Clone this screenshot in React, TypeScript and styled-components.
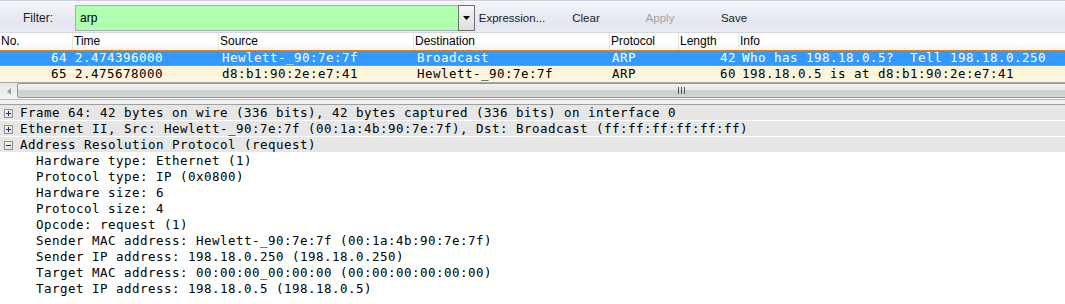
import React from "react";
import styled, { createGlobalStyle } from "styled-components";

const Global = createGlobalStyle`
  html, body { margin: 0; padding: 0; background: #ffffff; overflow: hidden; }
  #root { width: 1065px; height: 304px; overflow: hidden; }
`;

const UI_FONT = `"Liberation Sans", Arial, sans-serif`;
const MONO = `"DejaVu Sans Mono", "Liberation Mono", monospace`;

const Page = styled.div`
  width: 1065px;
  height: 304px;
  display: flex;
  flex-direction: column;
  background: #ffffff;
  overflow: hidden;
`;

/* ---------- Toolbar ---------- */
const Toolbar = styled.div`
  height: 33px;
  box-sizing: border-box;
  display: flex;
  align-items: center;
  padding-top: 2px;
  border-top: 1px solid #c9cddc;
  box-shadow: inset 0 1px 0 #ffffff;
  background: linear-gradient(to bottom, #f4f5fa 0%, #eceef6 35%, #e3e6f0 70%, #e9ebf3 100%);
  border-bottom: 1px solid #d4d7e1;
  font-family: ${UI_FONT};
  font-size: 11.5px;
  color: #1b1b1b;
`;

const FilterLabel = styled.div`
  width: 75px;
  box-sizing: border-box;
  padding-left: 23px;
  font-size: 12px;
`;

const FilterField = styled.div`
  width: 383px;
  height: 26px;
  box-sizing: border-box;
  border: 1px solid #a9acb5;
  border-right: none;
  background: #afffaf;
  display: flex;
  align-items: center;
  padding-left: 4px;
  font-size: 12px;
  color: #000;
`;

const DropButton = styled.div`
  width: 17px;
  height: 26px;
  box-sizing: border-box;
  border: 1px solid #6f6f6f;
  background: linear-gradient(to bottom, #f6f6f6, #dedede);
  display: flex;
  align-items: center;
  justify-content: center;
`;

const ToolButton = styled.div<{ $disabled?: boolean }>`
  width: 74px;
  text-align: center;
  color: ${(p) => (p.$disabled ? "#a3a3a3" : "#1b1b1b")};
`;

/* ---------- Packet list ---------- */
const COLS = "72px 146px 195px 196px 69px 60px 1fr";

const HeaderRow = styled.div`
  height: 17px;
  display: grid;
  grid-template-columns: ${COLS};
  background: linear-gradient(to bottom, #ffffff 0%, #ffffff 60%, #f3f3f3 100%);
  font-family: ${UI_FONT};
  font-size: 12px;
  color: #000;
`;

const HeaderCell = styled.div<{ $first?: boolean }>`
  box-sizing: border-box;
  padding-left: 1px;
  line-height: 17px;
  white-space: nowrap;
  overflow: hidden;
  border-left: ${(p) => (p.$first ? "none" : "1px solid #e3e3e3")};
`;

const PacketRow = styled.div<{ $selected?: boolean }>`
  height: 16px;
  box-sizing: border-box;
  display: grid;
  grid-template-columns: ${COLS};
  font-family: ${MONO};
  font-size: 12.5px;
  letter-spacing: 0.475px;
  line-height: 14px;
  white-space: pre;
  color: ${(p) => (p.$selected ? "#ffffff" : "#000000")};
  background: ${(p) => (p.$selected ? "#3399ff" : "#fff5db")};
  border-top: 1px ${(p) => (p.$selected ? "dotted #e8902e" : "solid #fff5db")};
  border-bottom: 1px ${(p) => (p.$selected ? "dotted #e8902e" : "solid #fff5db")};
`;

const Cell = styled.div<{ $right?: boolean; $pl?: number; $pr?: number }>`
  text-align: ${(p) => (p.$right ? "right" : "left")};
  padding-left: ${(p) => p.$pl ?? 0}px;
  padding-right: ${(p) => p.$pr ?? 0}px;
`;

const ListBottom = styled.div`
  height: 1px;
  background: #a7a7a7;
`;

const HScroll = styled.div`
  height: 16px;
  display: flex;
  overflow: hidden;
  background: linear-gradient(to bottom, #e6e6e6, #f3f3f3);
`;

const ArrowBtn = styled.div`
  width: 17px;
  flex: none;
  display: flex;
  align-items: center;
  justify-content: center;
`;

const Thumb = styled.div`
  width: 1328px;
  flex: none;
  box-sizing: border-box;
  height: 15px;
  border: 1px solid #979797;
  border-radius: 2px;
  background: linear-gradient(
    to bottom,
    #f2f2f2 0%,
    #e6e6e6 45%,
    #cdcdcd 52%,
    #d6d6d6 100%
  );
  display: flex;
  align-items: center;
  justify-content: center;
`;

const Splitter = styled.div`
  box-sizing: border-box;
  height: 6px;
  background: #f0f0f0;
  border-top: 1px solid #b9b9b9;
  border-bottom: 1px solid #a0a0a0;
`;

/* ---------- Details ---------- */
const Details = styled.div`
  flex: 1;
  font-family: ${MONO};
  font-size: 12.5px;
  letter-spacing: 0.475px;
  color: #000;
`;

const TreeRow = styled.div<{ $header?: boolean; $indent?: number }>`
  height: 16px;
  box-sizing: border-box;
  display: flex;
  align-items: flex-start;
  line-height: 15px;
  white-space: pre;
  padding-left: ${(p) => p.$indent ?? 4}px;
  background: ${(p) => (p.$header ? "#e6e6e6" : "#ffffff")};
  border-bottom: 1px solid #ffffff;
`;

const Expander = styled.svg`
  flex: none;
  margin: 4px 7px 0 0;
`;

const ExpandIcon = ({ open }: { open: boolean }) => (
  <Expander width="9" height="9" viewBox="0 0 9 9">
    <defs>
      <linearGradient id={open ? "gm" : "gp"} x1="0" y1="0" x2="1" y2="1">
        <stop offset="0" stopColor="#ffffff" />
        <stop offset="1" stopColor="#d9d9d9" />
      </linearGradient>
    </defs>
    <rect x="0.5" y="0.5" width="8" height="8" fill={`url(#${open ? "gm" : "gp"})`} stroke="#919191" />
    <line x1="2" y1="4.5" x2="7" y2="4.5" stroke="#1f2f6a" />
    {!open && <line x1="4.5" y1="2" x2="4.5" y2="7" stroke="#1f2f6a" />}
  </Expander>
);

const headers = ["No.", "Time", "Source", "Destination", "Protocol", "Length", "Info"];

const packets = [
  {
    no: "64",
    time: "2.474396000",
    src: "Hewlett-_90:7e:7f",
    dst: "Broadcast",
    proto: "ARP",
    len: "42",
    info: "Who has 198.18.0.5?  Tell 198.18.0.250",
    selected: true,
  },
  {
    no: "65",
    time: "2.475678000",
    src: "d8:b1:90:2e:e7:41",
    dst: "Hewlett-_90:7e:7f",
    proto: "ARP",
    len: "60",
    info: "198.18.0.5 is at d8:b1:90:2e:e7:41",
    selected: false,
  },
];

const arpFields = [
  "Hardware type: Ethernet (1)",
  "Protocol type: IP (0x0800)",
  "Hardware size: 6",
  "Protocol size: 4",
  "Opcode: request (1)",
  "Sender MAC address: Hewlett-_90:7e:7f (00:1a:4b:90:7e:7f)",
  "Sender IP address: 198.18.0.250 (198.18.0.250)",
  "Target MAC address: 00:00:00_00:00:00 (00:00:00:00:00:00)",
  "Target IP address: 198.18.0.5 (198.18.0.5)",
];

export default function App() {
  return (
    <Page>
      <Global />
      <Toolbar>
        <FilterLabel>Filter:</FilterLabel>
        <FilterField>arp</FilterField>
        <DropButton>
          <svg width="7" height="4" viewBox="0 0 7 4">
            <polygon points="0,0 7,0 3.5,4" fill="#000" />
          </svg>
        </DropButton>
        <ToolButton>Expression...</ToolButton>
        <ToolButton>Clear</ToolButton>
        <ToolButton $disabled>Apply</ToolButton>
        <ToolButton>Save</ToolButton>
      </Toolbar>

      <HeaderRow>
        {headers.map((h, i) => (
          <HeaderCell key={h} $first={i === 0}>
            {h}
          </HeaderCell>
        ))}
      </HeaderRow>

      {packets.map((p) => (
        <PacketRow key={p.no} $selected={p.selected}>
          <Cell $right $pr={5}>{p.no}</Cell>
          <Cell $pl={3}>{p.time}</Cell>
          <Cell $pl={4}>{p.src}</Cell>
          <Cell $pl={4}>{p.dst}</Cell>
          <Cell $pl={3}>{p.proto}</Cell>
          <Cell $right $pr={2}>{p.len}</Cell>
          <Cell $pl={4}>{p.info}</Cell>
        </PacketRow>
      ))}
      <ListBottom />

      <HScroll>
        <ArrowBtn>
          <svg width="4" height="7" viewBox="0 0 4 7">
            <polygon points="4,0 4,7 0,3.5" fill="#a0a0a0" />
          </svg>
        </ArrowBtn>
        <Thumb>
          <svg width="7" height="7" viewBox="0 0 7 7">
            <rect x="0" y="0" width="1" height="7" fill="#555" />
            <rect x="3" y="0" width="1" height="7" fill="#555" />
            <rect x="6" y="0" width="1" height="7" fill="#555" />
          </svg>
        </Thumb>
      </HScroll>
      <Splitter />

      <Details>
        <TreeRow $header>
          <ExpandIcon open={false} />
          Frame 64: 42 bytes on wire (336 bits), 42 bytes captured (336 bits) on interface 0
        </TreeRow>
        <TreeRow $header>
          <ExpandIcon open={false} />
          Ethernet II, Src: Hewlett-_90:7e:7f (00:1a:4b:90:7e:7f), Dst: Broadcast (ff:ff:ff:ff:ff:ff)
        </TreeRow>
        <TreeRow $header>
          <ExpandIcon open={true} />
          Address Resolution Protocol (request)
        </TreeRow>
        {arpFields.map((f) => (
          <TreeRow key={f} $indent={36}>
            {f}
          </TreeRow>
        ))}
      </Details>
    </Page>
  );
}
